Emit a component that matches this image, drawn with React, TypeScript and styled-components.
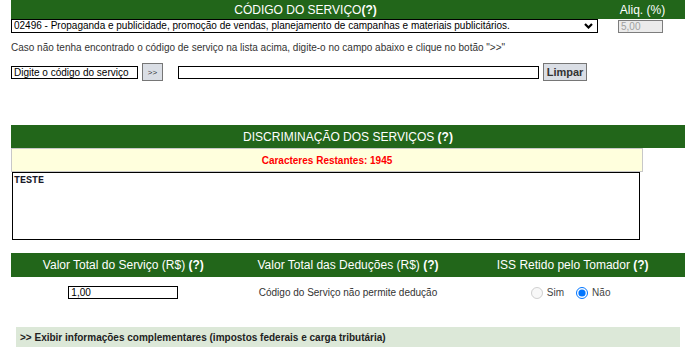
import React from 'react';
import styled, { createGlobalStyle } from 'styled-components';

const GlobalStyle = createGlobalStyle`
  body {
    margin: 0;
    background: #fff;
    font-family: "Liberation Sans", Arial, sans-serif;
  }
  * { box-sizing: border-box; }
`;

const Page = styled.div`
  width: 685px;
  padding-left: 11px;
`;

const TopGrid = styled.div`
  display: grid;
  grid-template-columns: 589px 1fr;
  grid-template-rows: 19px 14px;
`;

const HeadCell = styled.div<{ $h: number }>`
  background: #22661a;
  color: #fff;
  font-size: 12px;
  height: ${p => p.$h}px;
  display: flex;
  align-items: center;
  justify-content: center;
  white-space: nowrap;

  b { font-weight: bold; }
`;

const SelectWrap = styled.div`
  position: relative;
  width: 587px;
  height: 14px;
`;

const Select = styled.select`
  appearance: none;
  display: block;
  width: 100%;
  height: 14px;
  border: 1px solid #000;
  border-radius: 0;
  background: #fff;
  color: #000;
  font-family: "Liberation Sans", Arial, sans-serif;
  font-size: 10px;
  padding: 0 0 0 2px;
  line-height: 12px;
  outline: none;
`;

const Chevron = styled.svg`
  position: absolute;
  right: 5px;
  top: 4px;
  pointer-events: none;
`;

const AliqInput = styled.input`
  display: block;
  margin: 1px 0 0 18px;
  width: 45px;
  height: 13px;
  border: 1px solid #7d7d7d;
  background: #ebebeb;
  color: #a0a0a0;
  font-family: "Liberation Sans", Arial, sans-serif;
  font-size: 10px;
  padding: 0 2px;
`;

const Hint = styled.div`
  margin-top: 9px;
  font-size: 10px;
  line-height: 12px;
  color: #333;
`;

const CodeRow = styled.div`
  margin-top: 9px;
  height: 18px;
  display: flex;
  align-items: center;
`;

const TextInput = styled.input<{ $w: number }>`
  display: block;
  width: ${p => p.$w}px;
  height: 13px;
  border: 1px solid #000;
  background: #fff;
  color: #000;
  font-family: "Liberation Sans", Arial, sans-serif;
  font-size: 10px;
  padding: 0 2px;
  outline: none;
`;

const GrayButton = styled.button<{ $w: number; $bold?: boolean }>`
  display: block;
  width: ${p => p.$w}px;
  height: 18px;
  border: 1px solid #767676;
  background: #dadee5;
  color: #333;
  font-family: "Liberation Sans", Arial, sans-serif;
  font-size: ${p => (p.$bold ? 11 : 8)}px;
  font-weight: ${p => (p.$bold ? 'bold' : 'normal')};
  padding: 0;
  margin: 0 ${p => (p.$bold ? 0 : 15)}px 0 4px;
`;

const SectionHead = styled(HeadCell)`
  margin-top: 44px;
`;

const Counter = styled.div`
  width: 632px;
  height: 24px;
  border: 1px solid #c8c8c8;
  background: #ffffdd;
  color: #ff0000;
  font-size: 10px;
  font-weight: bold;
  display: flex;
  align-items: center;
  justify-content: center;
`;

const Area = styled.textarea`
  display: block;
  margin-left: 1px;
  width: 628px;
  height: 68px;
  border: 1px solid #000;
  resize: none;
  font-family: "Liberation Mono", "Courier New", monospace;
  font-size: 10px;
  font-weight: bold;
  padding: 2px 1px;
  color: #1a1a2a;
  outline: none;
`;

const ValuesHead = styled.div`
  margin-top: 13px;
  height: 24px;
  background: #22661a;
  color: #fff;
  font-size: 12px;
  display: grid;
  grid-template-columns: repeat(3, 1fr);
  align-items: center;
  justify-items: center;

  b { font-weight: bold; }
`;

const ValuesRow = styled.div`
  margin-top: 9px;
  height: 12px;
  display: grid;
  grid-template-columns: repeat(3, 1fr);
  align-items: center;
  justify-items: center;
  font-size: 10px;
  color: #333;
`;

const Radios = styled.div`
  display: flex;
  align-items: center;
  padding-left: 2px;
  padding-right: 4px;

  label {
    display: flex;
    align-items: center;
    margin-right: 7px;
    color: #444;
  }

  input {
    width: 12px;
    height: 12px;
    margin: 0 4px 0 5px;
  }
`;

const MoreBar = styled.div`
  margin: 29px 0 0 5px;
  width: 664px;
  height: 20px;
  background: #dce8d8;
  color: #222;
  font-size: 10px;
  font-weight: bold;
  display: flex;
  align-items: center;
  padding-left: 4px;
`;

export default function App() {
  return (
    <Page>
      <GlobalStyle />
      <TopGrid>
        <HeadCell $h={19}>CÓDIGO DO SERVIÇO<b>(?)</b></HeadCell>
        <HeadCell $h={19}>Aliq. (%)</HeadCell>
        <SelectWrap>
          <Select defaultValue="02496">
            <option value="02496">
              02496 - Propaganda e publicidade, promoção de vendas, planejamento de campanhas e materiais publicitários.
            </option>
          </Select>
          <Chevron width="9" height="6" viewBox="0 0 9 6">
            <path d="M1 1 L4.5 4.5 L8 1" stroke="#000" strokeWidth="2.2" fill="none" />
          </Chevron>
        </SelectWrap>
        <div>
          <AliqInput defaultValue="5,00" disabled />
        </div>
      </TopGrid>

      <Hint>
        Caso não tenha encontrado o código de serviço na lista acima, digite-o no campo abaixo e clique no botão "&gt;&gt;"
      </Hint>

      <CodeRow>
        <TextInput $w={127} defaultValue="Digite o código do serviço" />
        <GrayButton $w={21}>&gt;&gt;</GrayButton>
        <TextInput $w={361} defaultValue="" />
        <GrayButton $w={44} $bold>Limpar</GrayButton>
      </CodeRow>

      <SectionHead $h={23}>DISCRIMINAÇÃO DOS SERVIÇOS&nbsp;<b>(?)</b></SectionHead>
      <Counter>Caracteres Restantes: 1945</Counter>
      <Area defaultValue="TESTE" />

      <ValuesHead>
        <span>Valor Total do Serviço (R$) <b>(?)</b></span>
        <span>Valor Total das Deduções (R$) <b>(?)</b></span>
        <span>ISS Retido pelo Tomador <b>(?)</b></span>
      </ValuesHead>

      <ValuesRow>
        <TextInput $w={110} defaultValue="1,00" />
        <span>Código do Serviço não permite dedução</span>
        <Radios>
          <label><input type="radio" name="iss" disabled />Sim</label>
          <label><input type="radio" name="iss" defaultChecked />Não</label>
        </Radios>
      </ValuesRow>

      <MoreBar>&gt;&gt; Exibir informações complementares (impostos federais e carga tributária)</MoreBar>
    </Page>
  );
}
